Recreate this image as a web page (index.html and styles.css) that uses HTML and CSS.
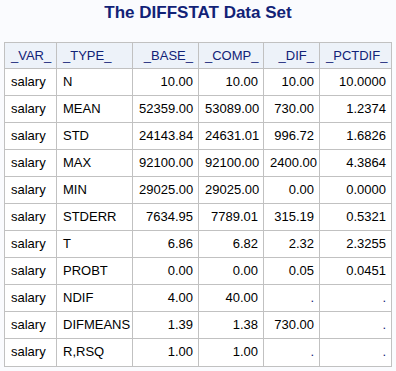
FILE: index.html
```html
<!DOCTYPE html>
<html>
<head>
<meta charset="utf-8">
<link rel="stylesheet" href="styles.css">
</head>
<body>
<div class="title">The DIFFSTAT Data Set</div>
<table class="data">
<colgroup>
<col class="c1"><col class="c2"><col class="c3"><col class="c4"><col class="c5"><col class="c6">
</colgroup>
<thead>
<tr><th class="l">_VAR_</th><th class="l">_TYPE_</th><th>_BASE_</th><th>_COMP_</th><th>_DIF_</th><th>_PCTDIF_</th></tr>
</thead>
<tbody>
<tr><td class="l">salary</td><td class="l">N</td><td>10.00</td><td>10.00</td><td>10.00</td><td>10.0000</td></tr>
<tr><td class="l">salary</td><td class="l">MEAN</td><td>52359.00</td><td>53089.00</td><td>730.00</td><td>1.2374</td></tr>
<tr><td class="l">salary</td><td class="l">STD</td><td>24143.84</td><td>24631.01</td><td>996.72</td><td>1.6826</td></tr>
<tr><td class="l">salary</td><td class="l">MAX</td><td>92100.00</td><td>92100.00</td><td>2400.00</td><td>4.3864</td></tr>
<tr><td class="l">salary</td><td class="l">MIN</td><td>29025.00</td><td>29025.00</td><td>0.00</td><td>0.0000</td></tr>
<tr><td class="l">salary</td><td class="l">STDERR</td><td>7634.95</td><td>7789.01</td><td>315.19</td><td>0.5321</td></tr>
<tr><td class="l">salary</td><td class="l">T</td><td>6.86</td><td>6.82</td><td>2.32</td><td>2.3255</td></tr>
<tr><td class="l">salary</td><td class="l">PROBT</td><td>0.00</td><td>0.00</td><td>0.05</td><td>0.0451</td></tr>
<tr><td class="l">salary</td><td class="l">NDIF</td><td>4.00</td><td>40.00</td><td class="miss">.</td><td class="miss">.</td></tr>
<tr><td class="l">salary</td><td class="l">DIFMEANS</td><td>1.39</td><td>1.38</td><td>730.00</td><td class="miss">.</td></tr>
<tr><td class="l">salary</td><td class="l">R,RSQ</td><td>1.00</td><td>1.00</td><td class="miss">.</td><td class="miss">.</td></tr>
</tbody>
</table>
</body>
</html>
```
FILE: styles.css
```css
html, body {
  margin: 0;
  padding: 0;
  background: #fafbfe;
  font-family: "Liberation Sans", Arial, sans-serif;
}
.title {
  height: 26px;
  line-height: 26px;
  margin-bottom: 16px;
  text-align: center;
  font-weight: bold;
  font-size: 17px;
  color: #112277;
}
.data {
  margin-left: 4px;
  border-collapse: collapse;
  table-layout: fixed;
  width: 387px;
  border: 1px solid #c1c1c1;
  font-size: 13px;
}
.c1 { width: 52px; }
.c2 { width: 76px; }
.c3 { width: 66px; }
.c4 { width: 65px; }
.c5 { width: 56px; }
.c6 { width: 72px; }
.data th, .data td {
  border: 1px solid #c1c1c1;
  padding: 5px 5px 5px 6px;
  line-height: 16px;
  height: 16px;
  text-align: right;
  white-space: nowrap;
}
.data th {
  background: #edf2f9;
  color: #112277;
  font-weight: normal;
  padding-bottom: 4px;
}
.data td {
  background: #ffffff;
  color: #000000;
}
.data tbody tr:last-child td {
  padding-bottom: 6px;
}
.data .l {
  text-align: left;
}
.data .miss {
  color: #112277;
}
```
